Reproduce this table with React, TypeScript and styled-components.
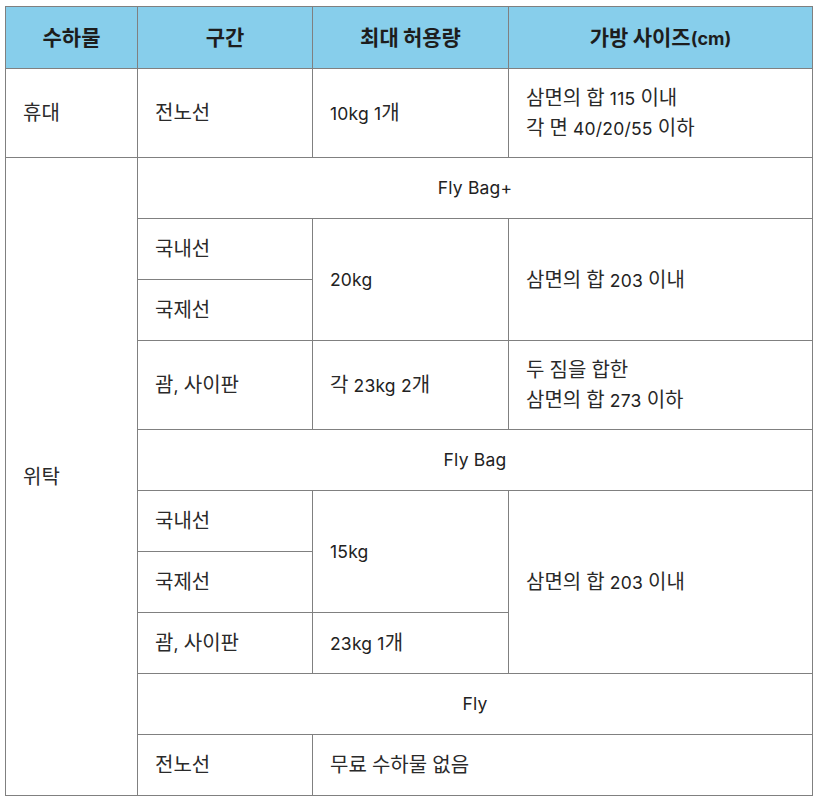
import React from "react";
import styled, { createGlobalStyle } from "styled-components";

const Global = createGlobalStyle`
  html, body { margin: 0; padding: 0; background: #fff; }
  body { padding: 6px 0 0 5px; font-family: Inter, "Noto Sans CJK KR", sans-serif; }
`;

const Table = styled.table`
  border-collapse: collapse;
  table-layout: fixed;
  width: 807px;
  color: #222;
  font-size: 17.5px;
`;

const Th = styled.th`
  background: #87ceeb;
  border: 1px solid #808080;
  height: 61px;
  padding: 0;
  font-weight: 700;
  font-size: 18px;
  line-height: 28px;
  text-align: center;
  color: #1d1d1d;
`;

const Td = styled.td<{ $center?: boolean; $tall?: boolean }>`
  border: 1px solid #808080;
  height: ${(p) => (p.$tall ? 88 : 60)}px;
  padding: ${(p) => (p.$center ? "0" : "0 0 0 17px")};
  text-align: ${(p) => (p.$center ? "center" : "left")};
  vertical-align: middle;
  line-height: 28px;
  font-weight: 400;
  letter-spacing: 0.2px;
`;

const Hangul = styled.span<{ $bold?: boolean }>`
  font-family: "Noto Sans CJK KR", sans-serif;
  font-size: ${(p) => (p.$bold ? 21 : 20)}px;
  font-weight: ${(p) => (p.$bold ? 700 : 400)};
  letter-spacing: 0;
  color: ${(p) => (p.$bold ? "#1d1d1d" : "#2a2a2a")};
`;

const HANGUL_RE = /([\uAC00-\uD7A3\u3131-\u318E]+)/;

function Mixed({ text, bold }: { text: string; bold?: boolean }) {
  const parts = text.split(HANGUL_RE);
  return (
    <>
      {parts.map((p, i) =>
        HANGUL_RE.test(p) ? (
          <Hangul key={i} $bold={bold}>
            {p}
          </Hangul>
        ) : (
          <React.Fragment key={i}>{p}</React.Fragment>
        )
      )}
    </>
  );
}

function Lines({ lines }: { lines: string[] }) {
  return (
    <>
      {lines.map((l, i) => (
        <React.Fragment key={i}>
          {i > 0 && <br />}
          <Mixed text={l} />
        </React.Fragment>
      ))}
    </>
  );
}

export default function App() {
  return (
    <>
      <Global />
      <Table>
        <colgroup>
          <col style={{ width: 132 }} />
          <col style={{ width: 175 }} />
          <col style={{ width: 196 }} />
          <col style={{ width: 304 }} />
        </colgroup>
        <thead>
          <tr>
            <Th><Mixed text="수하물" bold /></Th>
            <Th><Mixed text="구간" bold /></Th>
            <Th><Mixed text="최대 허용량" bold /></Th>
            <Th><Mixed text="가방 사이즈(cm)" bold /></Th>
          </tr>
        </thead>
        <tbody>
          <tr>
            <Td $tall><Mixed text="휴대" /></Td>
            <Td $tall><Mixed text="전노선" /></Td>
            <Td $tall><Mixed text="10kg 1개" /></Td>
            <Td $tall>
              <Lines lines={["삼면의 합 115 이내", "각 면 40/20/55 이하"]} />
            </Td>
          </tr>
          <tr>
            <Td rowSpan={11}><Mixed text="위탁" /></Td>
            <Td colSpan={3} $center>Fly Bag+</Td>
          </tr>
          <tr>
            <Td><Mixed text="국내선" /></Td>
            <Td rowSpan={2}>20kg</Td>
            <Td rowSpan={2}><Mixed text="삼면의 합 203 이내" /></Td>
          </tr>
          <tr>
            <Td><Mixed text="국제선" /></Td>
          </tr>
          <tr>
            <Td $tall><Mixed text="괌, 사이판" /></Td>
            <Td $tall><Mixed text="각 23kg 2개" /></Td>
            <Td $tall>
              <Lines lines={["두 짐을 합한", "삼면의 합 273 이하"]} />
            </Td>
          </tr>
          <tr>
            <Td colSpan={3} $center>Fly Bag</Td>
          </tr>
          <tr>
            <Td><Mixed text="국내선" /></Td>
            <Td rowSpan={2}>15kg</Td>
            <Td rowSpan={3}><Mixed text="삼면의 합 203 이내" /></Td>
          </tr>
          <tr>
            <Td><Mixed text="국제선" /></Td>
          </tr>
          <tr>
            <Td><Mixed text="괌, 사이판" /></Td>
            <Td><Mixed text="23kg 1개" /></Td>
          </tr>
          <tr>
            <Td colSpan={3} $center>Fly</Td>
          </tr>
          <tr>
            <Td><Mixed text="전노선" /></Td>
            <Td colSpan={2}><Mixed text="무료 수하물 없음" /></Td>
          </tr>
        </tbody>
      </Table>
    </>
  );
}
